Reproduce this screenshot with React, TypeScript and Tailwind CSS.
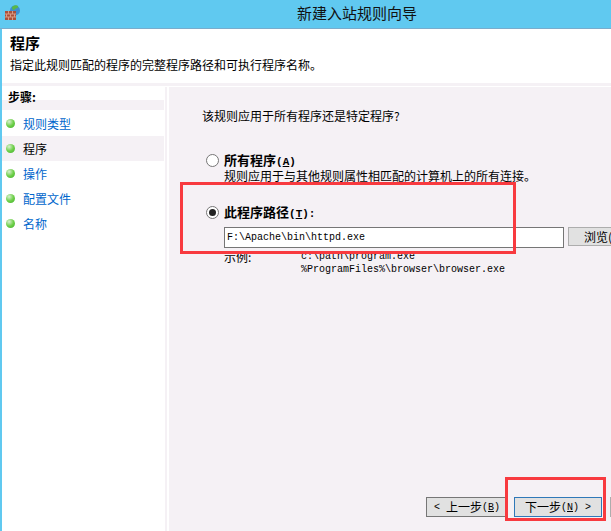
import React from "react";

const CJK = "font-['Noto_Sans_CJK_SC','Liberation_Sans',sans-serif]";
const MONO = "font-['Liberation_Mono','Noto_Sans_CJK_SC',monospace]";

const steps = [
  { label: "规则类型", active: false },
  { label: "程序", active: true },
  { label: "操作", active: false },
  { label: "配置文件", active: false },
  { label: "名称", active: false },
];

function Dot() {
  return (
    <span className="w-[9px] h-[9px] rounded-full shrink-0 bg-[radial-gradient(circle_at_35%_30%,#d8efd0_0%,#6fd04a_50%,#3fae2a_100%)]" />
  );
}

function WallIcon() {
  return (
    <svg width="16" height="16" viewBox="0 0 16 16" className="block">
      <circle cx="10" cy="5.500" r="5" fill="#3f8fd0" />
      <path d="M7 2c2-2 5-2 6-1 1 2-2 2-3 3-1 2-3 1-3-2z" fill="#58b848" />
      <rect x="0" y="6" width="11" height="9" fill="#a9503a" />
      <path d="M0 9h11M0 12h11M3.500 6v3M7.500 6v3M1.500 9v3M5.500 9v3M9.500 9v3M3.500 12v3M7.500 12v3" stroke="#d89a85" strokeWidth="1" fill="none" />
    </svg>
  );
}

function Radio({ checked }: { checked?: boolean }) {
  return (
    <span className="w-[13px] h-[13px] rounded-full border border-[#767676] bg-white shrink-0 flex items-center justify-center">
      {checked && <span className="w-[7px] h-[7px] rounded-full bg-[#222]" />}
    </span>
  );
}

export default function App() {
  return (
    <div className={`relative w-[611px] h-[531px] overflow-hidden bg-[#60c9f0] text-black ${CJK}`}>
      {/* Title bar */}
      <div className="h-[29px] relative flex items-start pt-[5px] pl-[297px] border-b border-[#7aaccc]">
        <span className="absolute left-[5px] top-[5px]"><WallIcon /></span>
        <span className="text-[15px] leading-[16px] text-[#111] whitespace-nowrap">新建入站规则向导</span>
      </div>

      <div className="ml-[2px] h-[502px] bg-white flex flex-col">
        {/* Header */}
        <div className="h-[58px] shrink-0 pl-[8px] pt-[5px] flex flex-col">
          <div className="text-[15px] leading-[17px] font-bold">程序</div>
          <div className="text-[12px] leading-[16px] mt-[6px] whitespace-nowrap">指定此规则匹配的程序的完整程序路径和可执行程序名称。</div>
          <div className="mt-[10px] h-[3px] ml-[-8px] bg-[#f5f1f5]" />
        </div>

        <div className="flex flex-1 min-h-0">
          {/* Steps sidebar */}
          <div className="w-[165px] shrink-0 border-r-2 border-[#f5f1f5]">
            <div className="relative z-10 h-[13px] pl-[6px] text-[12px] leading-[20px] font-bold">步骤:</div>
            <div className="h-[10px] bg-[#f5f1f5] mr-[1px]" />
            <div className="flex flex-col pt-[1px]">
              {steps.map((s) => (
                <div
                  key={s.label}
                  className={`h-[25px] flex items-center pl-[4px] gap-[8px] mr-[1px] text-[12px] ${s.active ? "bg-[#f5f1f5] text-black" : "text-[#0066cc]"}`}
                >
                  <Dot />
                  <span>{s.label}</span>
                </div>
              ))}
            </div>
          </div>

          <div className="w-[2px] shrink-0 bg-white" />

          {/* Main panel */}
          <div className="flex-1 bg-[#f5f1f5] pl-[33px] pt-[21px] relative">
            <div className="text-[12px] leading-[16px]">该规则应用于所有程序还是特定程序?</div>

            <div className="mt-[28px] flex items-center gap-[5px] h-[16px] text-[13px] font-bold ml-[4px]">
              <Radio />
              <span className="whitespace-nowrap">所有程序<span className={`text-[11px] ${MONO}`}>(<span className="underline">A</span>)</span></span>
            </div>
            <div className="ml-[22px] text-[12px] leading-[14px] mt-[1px] whitespace-nowrap">规则应用于与其他规则属性相匹配的计算机上的所有连接。</div>

            <div className="mt-[21px] flex items-center gap-[5px] h-[16px] text-[13px] font-bold ml-[4px]">
              <Radio checked />
              <span className="whitespace-nowrap">此程序路径<span className={`text-[11px] ${MONO}`}>(<span className="underline">T</span>):</span></span>
            </div>
            <div className="ml-[22px] mt-[7px] flex items-start whitespace-nowrap">
              <div className={`w-[340px] h-[21px] border border-[#767676] bg-white pl-[2px] text-[10px] leading-[19px] ${MONO}`}>F:\Apache\bin\httpd.exe</div>
              <div className="ml-[4px] w-[60px] h-[19px] border border-[#adadad] bg-[#e1e1e1] pl-[15px] text-[12px] leading-[17px]">浏览(R)...</div>
            </div>
            <div className="ml-[22px] flex text-[10px] leading-[13px] mt-[2px]">
              <span className="w-[77px] text-[12px]">示例:</span>
              <div className={MONO}>
                <div>c:\path\program.exe</div>
                <div>%ProgramFiles%\browser\browser.exe</div>
              </div>
            </div>

            {/* Buttons */}
            <div className="absolute left-[257px] top-[410px] flex items-start text-[12px] whitespace-nowrap">
              <div className="w-[80px] h-[20px] border border-[#767676] bg-[#e1e1e1] flex items-center justify-center pl-[2px]">
                <span className={`text-[10px] ${MONO}`}>&lt;&nbsp;</span>上一步<span className={`text-[10px] ${MONO}`}>(<span className="underline">B</span>)</span>
              </div>
              <div className="ml-[8px] w-[88px] h-[20px] border border-[#2f78b8] bg-[#e1e1e1] flex items-center justify-center">
                下一步<span className={`text-[10px] ${MONO}`}>(<span className="underline">N</span>)&nbsp;&gt;</span>
              </div>
              <div className="ml-[8px] w-[60px] h-[20px] border border-[#adadad] bg-[#e1e1e1]" />
            </div>
          </div>
        </div>
      </div>

      {/* Red annotation boxes */}
      <div className="absolute left-[180px] top-[182px] w-[336px] h-[72px] border-[3px] border-[#f83a3f]" />
      <div className="absolute left-[505px] top-[477px] w-[101px] h-[44px] border-[3px] border-[#f83a3f]" />
    </div>
  );
}
